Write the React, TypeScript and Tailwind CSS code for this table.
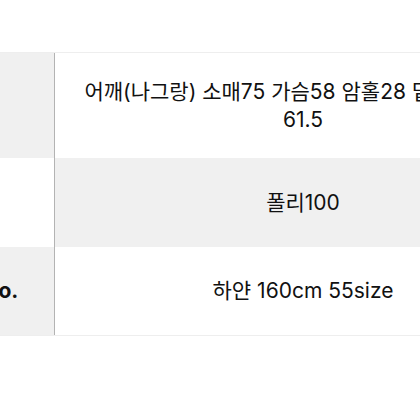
const rows = [
  { label: '사이즈', lines: ['어깨(나그랑) 소매75 가슴58 암홀28 밑단48 총장', '61.5'], shaded: 'left', h: 'h-[105px]' },
  { label: '소재', lines: ['폴리100'], shaded: 'right', h: 'h-[89px]' },
  { label: 'Model Info.', lines: ['하얀 160cm 55size'], shaded: 'left', h: 'h-[88px]' },
];

export default function App() {
  return (
    <div
      className="w-[420px] h-[420px] overflow-hidden bg-white text-[#111111]"
      style={{ fontFamily: 'Inter, "Noto Sans CJK KR", sans-serif' }}
    >
      <div className="mt-[52px] ml-[-133px] w-[684px] border-t border-b border-[#eeeeee]">
        {rows.map((row) => (
          <div key={row.label} className={`flex ${row.h}`}>
            <div
              className={`w-[188px] shrink-0 border-r border-[#b3b3b3] flex items-center justify-center text-[21px] font-bold whitespace-nowrap ${
                row.shaded === 'left' ? 'bg-[#f0f0f0]' : 'bg-white'
              }`}
            >
              {row.label}
            </div>
            <div
              className={`w-[496px] shrink-0 flex flex-col items-center justify-center text-[21px] leading-[28px] ${
                row.shaded === 'right' ? 'bg-[#f0f0f0]' : 'bg-white'
              }`}
            >
              {row.lines.map((line) => (
                <div key={line} className="whitespace-nowrap">
                  {line}
                </div>
              ))}
            </div>
          </div>
        ))}
      </div>
    </div>
  );
}
